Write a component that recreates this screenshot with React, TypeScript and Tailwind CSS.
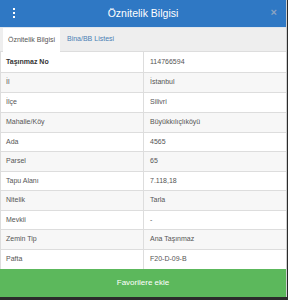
import React from "react";

const rows: { k: string; v: string; h: number }[] = [
  { k: "Taşınmaz No", v: "114766594", h: 20 },
  { k: "İl", v: "İstanbul", h: 20 },
  { k: "İlçe", v: "Silivri", h: 20 },
  { k: "Mahalle/Köy", v: "Büyükkılıçlıköyü", h: 20 },
  { k: "Ada", v: "4565", h: 19 },
  { k: "Parsel", v: "65", h: 20 },
  { k: "Tapu Alanı", v: "7.118,18", h: 19 },
  { k: "Nitelik", v: "Tarla", h: 20 },
  { k: "Mevkii", v: "-", h: 19 },
  { k: "Zemin Tip", v: "Ana Taşınmaz", h: 20 },
  { k: "Pafta", v: "F20-D-09-B", h: 20 },
];

export default function App() {
  return (
    <div
      className="w-[288px] h-[300px] flex flex-col bg-[#2b2b2b] overflow-hidden"
      style={{ fontFamily: '"Liberation Sans", Arial, sans-serif' }}
    >
      <div className="w-[287px] flex flex-col bg-white border-r border-[#d0d0d0]">
        {/* Header */}
        <div className="h-[27px] bg-[#2f78c4] flex items-center relative">
          <div className="absolute left-[13px] top-[8px] flex flex-col gap-[2px]">
            <span className="block w-[2px] h-[2px] bg-white" />
            <span className="block w-[2px] h-[2px] bg-white" />
            <span className="block w-[2px] h-[2px] bg-white" />
          </div>
          <div className="flex-1 text-center text-white text-[10.5px] leading-none">Öznitelik Bilgisi</div>
          <div className="absolute right-[9px] top-[7px] text-[#8aa3c2] text-[11px] font-bold leading-none">×</div>
        </div>
        {/* Tabs */}
        <div className="h-[25px] bg-[#eeeeee] border-t border-[#dfe6ee] border-b border-b-[#dddddd] flex items-stretch pl-[3px]">
          <div className="w-[57px] bg-white -mb-[1px] flex items-center justify-center text-[7px] text-[#555555]">
            Öznitelik Bilgisi
          </div>
          <div className="ml-[7px] flex items-center text-[7px] text-[#4a7fb5]">Bina/BB Listesi</div>
        </div>
        {/* Table */}
        <div className="flex flex-col border-l border-[#dddddd]">
          {rows.map((r, i) => (
            <div
              key={r.k}
              className={
                "flex text-[7px] text-[#555555] " +
                (i > 0 ? "border-t border-[#dddddd] " : "") +
                (i % 2 === 1 ? "bg-[#f7f7f7]" : "bg-white")
              }
              style={{ height: r.h }}
            >
              <div
                className={
                  "w-[143px] pl-[5px] flex items-center border-r border-[#dddddd] " +
                  (i === 0 ? "font-bold text-[#333333]" : "")
                }
              >
                {r.k}
              </div>
              <div className="flex-1 pl-[6px] flex items-center">{r.v}</div>
            </div>
          ))}
        </div>
        {/* Button */}
        <div className="h-[28px] bg-[#5cb85c] flex items-center justify-center text-white text-[8px]">
          Favorilere ekle
        </div>
      </div>
    </div>
  );
}
